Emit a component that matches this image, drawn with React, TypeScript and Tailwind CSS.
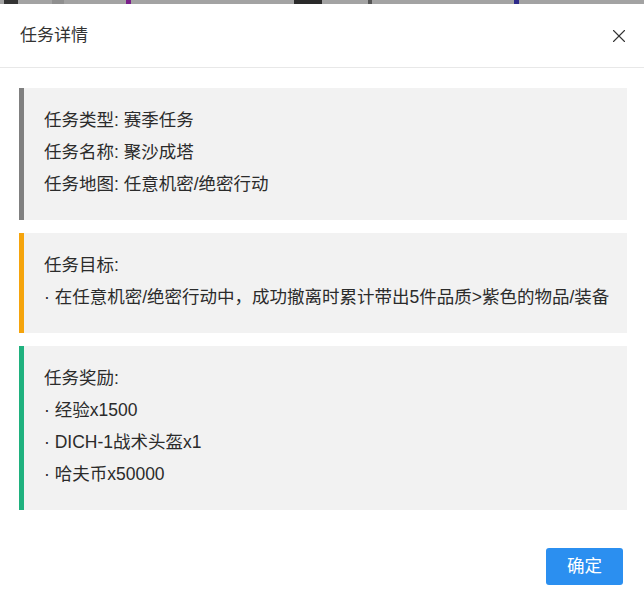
import { X } from "lucide-react";

const FONT = { fontFamily: '"Liberation Sans", "Noto Sans CJK SC", sans-serif' };

interface BlockProps {
  accent: string;
  lines: string[];
}

// 信息块：左侧彩色竖条 + 浅灰底
function InfoBlock({ accent, lines }: BlockProps) {
  return (
    <div className={`flex bg-[#f2f2f2] border-l-[5px] ${accent}`}>
      <div className="pl-5 pt-4 pb-[20px] text-[17.5px] leading-[32px] text-[#2b2b2b]">
        {lines.map((l) => (
          <p key={l}>{l}</p>
        ))}
      </div>
    </div>
  );
}

export default function App() {
  return (
    <div className="flex h-[598px] w-[644px] flex-col overflow-hidden bg-white" style={FONT}>
      {/* 背后页面露出的一条 */}
      <div className="flex h-[4px] items-stretch bg-[#a3a3a3]">
        <div className="ml-[4px] w-[14px] bg-[#333]" />
        <div className="ml-[34px] w-[12px] bg-[#8f8f8f]" />
        <div className="ml-[62px] w-[5px] bg-[#7a1f8a]" />
        <div className="ml-[163px] w-[28px] bg-[#2a2a2a]" />
        <div className="ml-[46px] w-[4px] bg-[#555]" />
        <div className="ml-[142px] w-[5px] bg-[#2e2a8a]" />
      </div>

      <div className="flex h-[64px] items-center justify-between border-b border-[#e8e8e8] pl-5 pr-[14px]">
        <span className="text-[17px] text-[#333]">任务详情</span>
        <X className="size-[22px] text-[#333]" strokeWidth={1.2} />
      </div>

      <div className="flex flex-col gap-[13px] px-[17px] pt-[20px] pl-[19px]">
        <InfoBlock
          accent="border-[#808080]"
          lines={["任务类型: 赛季任务", "任务名称: 聚沙成塔", "任务地图: 任意机密/绝密行动"]}
        />
        <InfoBlock
          accent="border-[#f5a40c]"
          lines={["任务目标:", "· 在任意机密/绝密行动中，成功撤离时累计带出5件品质>紫色的物品/装备"]}
        />
        <InfoBlock
          accent="border-[#1fb17e]"
          lines={["任务奖励:", "· 经验x1500", "· DICH-1战术头盔x1", "· 哈夫币x50000"]}
        />
      </div>

      <div className="flex justify-end pr-[21px] pt-[38px]">
        <button className="flex h-[37px] w-[77px] items-center justify-center rounded-[3px] bg-[#2b8ff0] text-[17.5px] text-white">
          确定
        </button>
      </div>
    </div>
  );
}
